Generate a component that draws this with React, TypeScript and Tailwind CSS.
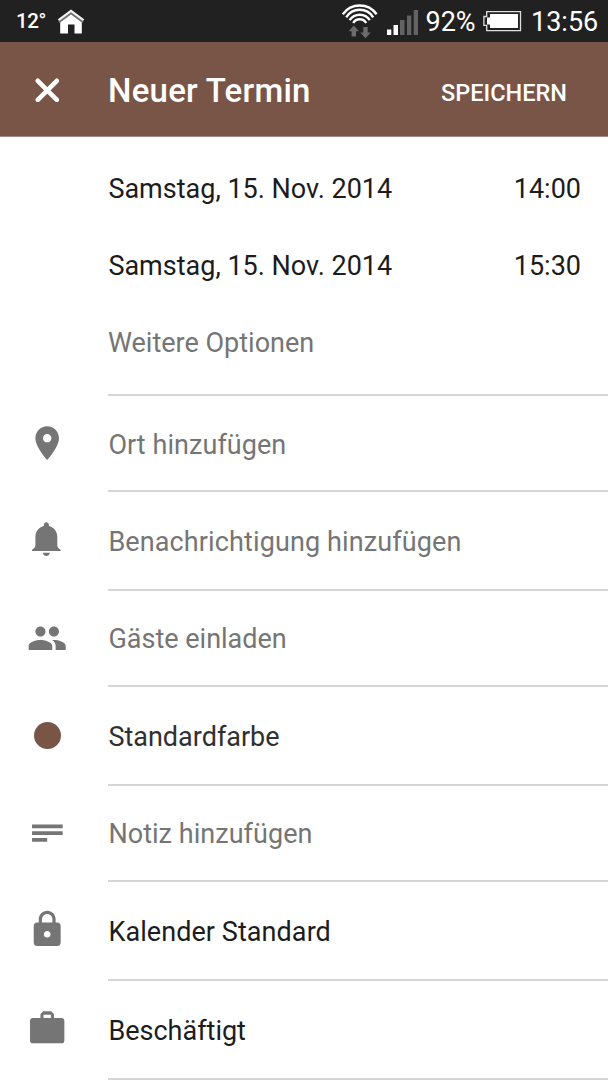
import type { ReactNode } from "react";

interface OptionRow {
  label: string;
  icon: ReactNode;
  height: string;
  textTop: string;
  color: string;
  tracking: string;
}

function Glyph({ d }: { d: string }) {
  return (
    <svg viewBox="0 0 24 24" className="w-[40.4px] h-[40.4px] fill-[#757575]">
      <path d={d} />
    </svg>
  );
}

const PIN =
  "M12 2C8.13 2 5 5.13 5 9c0 5.25 7 13 7 13s7-7.75 7-13c0-3.87-3.13-7-7-7zm0 9.5c-1.38 0-2.5-1.12-2.5-2.5s1.12-2.5 2.5-2.5 2.5 1.12 2.5 2.5-1.12 2.5-2.5 2.5z";
const BELL =
  "M9.4 20.1h4.2c-.1 1.1-1 1.900-2.100 1.900s-2-.8-2.100-1.900zM18 15.500v-5c0-3.07-2.13-5.64-5-6.32V3.5c0-.83-.67-1.5-1.5-1.5S10 2.67 10 3.5v.68c-2.87.68-5 3.25-5 6.32v5c0 1.200-.8 2.200-2 2.800v.7h17v-.7c-1.200-.6-2-1.600-2-2.800z";
const PEOPLE =
  "M16 11c1.66 0 2.99-1.34 2.99-3S17.66 5 16 5c-1.66 0-3 1.34-3 3s1.34 3 3 3zm-8 0c1.66 0 2.99-1.34 2.99-3S9.66 5 8 5C6.34 5 5 6.34 5 8s1.34 3 3 3zm0 2c-2.33 0-7 1.17-7 3.5V19h14v-2.5c0-2.33-4.67-3.5-7-3.5zm8 0c-.29 0-.62.02-.97.05 1.16.84 1.97 1.97 1.97 3.45V19h6v-2.5c0-2.33-4.67-3.5-7-3.5z";
const NOTES = "M3 6.900h18.200v2.200H3zM3 10.900h18.200v2.200H3zM3 14.900h9v2.200H3z";
const LOCK =
  "M18 8h-1V6c0-2.76-2.24-5-5-5S7 3.24 7 6v2H6c-1.1 0-2 .9-2 2v10c0 1.1.9 2 2 2h12c1.1 0 2-.9 2-2V10c0-1.1-.9-2-2-2zm-6 9c-1.1 0-2-.9-2-2s.9-2 2-2 2 .9 2 2-.9 2-2 2zm3.1-9H8.9V6c0-1.71 1.39-3.1 3.1-3.1 1.71 0 3.1 1.39 3.1 3.1v2z";
const WORK =
  "M20.600 6h-4.600V3.600l-1.600-1.600h-4.800L8 3.600V6H3.400c-.9 0-1.600.7-1.600 1.600v11.800c0 .9.7 1.600 1.600 1.600h17.200c.9 0 1.600-.7 1.600-1.600V7.600c0-.9-.7-1.600-1.600-1.600zM14.200 6H9.800V4h4.400v2z";

const rows: OptionRow[] = [
  { label: "Ort hinzufügen", icon: <Glyph d={PIN} />, height: "h-[96px]", textTop: "pt-[33px]", color: "text-[#757575]", tracking: "tracking-[0.05px]" },
  { label: "Benachrichtigung hinzufügen", icon: <Glyph d={BELL} />, height: "h-[99px]", textTop: "pt-[34px]", color: "text-[#757575]", tracking: "tracking-[0.12px]" },
  { label: "Gäste einladen", icon: <Glyph d={PEOPLE} />, height: "h-[96px]", textTop: "pt-[32px]", color: "text-[#757575]", tracking: "tracking-normal" },
  {
    label: "Standardfarbe",
    icon: <span className="block mt-[8px] w-[27px] h-[27px] rounded-full bg-[#795548]" />,
    height: "h-[99px]",
    textTop: "pt-[34px]",
    color: "text-[#303030]",
    tracking: "tracking-normal",
  },
  { label: "Notiz hinzufügen", icon: <Glyph d={NOTES} />, height: "h-[96px]", textTop: "pt-[32px]", color: "text-[#757575]", tracking: "tracking-[0.04px]" },
  { label: "Kalender Standard", icon: <Glyph d={LOCK} />, height: "h-[99px]", textTop: "pt-[34px]", color: "text-[#1c1c1c]", tracking: "tracking-[0.07px]" },
  { label: "Beschäftigt", icon: <Glyph d={WORK} />, height: "h-[99px]", textTop: "pt-[34px]", color: "text-[#1c1c1c]", tracking: "tracking-normal" },
];

const dates = [
  { date: "Samstag, 15. Nov. 2014", time: "14:00" },
  { date: "Samstag, 15. Nov. 2014", time: "15:30" },
];

function StatusBar() {
  return (
    <div className="h-[42px] shrink-0 bg-[#212121] text-white flex items-start">
      <span className="ml-[16px] mt-[9px] w-[30px] whitespace-nowrap text-[20.500px] leading-[24px] tracking-[-0.4px] font-medium">12°</span>
      <svg viewBox="0 0 28 26" className="ml-[11px] mt-[9px] w-[28px] h-[26px] shrink-0">
        <path d="M3.200 12.500 14 4l10.800 8.500v12h-7.300V15.500h-6.500v9H3.200z" fill="#fff" />
        <path d="M1.800 13 14 4l12.200 9" fill="none" stroke="#6f6f6f" strokeWidth="2.200" />
        <path d="M1.500 11.200 14 1.800l12.500 9.400" fill="none" stroke="#f2f2f2" strokeWidth="2.200" />
      </svg>
      <div className="flex-1" />
      <svg viewBox="342 0 78 42" className="w-[78px] h-[42px] shrink-0">
        {/* wifi */}
        <g fill="none" stroke="#fff" strokeWidth="2.400">
          <path d="M342.800 14.300A20.600 20.600 0 0 1 376.600 14.300" />
          <path d="M346.200 17.300A15.800 15.800 0 0 1 373.200 17.300" />
          <path d="M349.600 20.200A12 12 0 0 1 369.800 20.200" />
          <path d="M353.200 23A7.500 7.500 0 0 1 366.200 23" />
        </g>
        <path d="M353.800 25.500l5.200 5.700h-3v5.300h-4.400v-5.300h-3zM365.500 38.300l-5.200-5.800h3v-5.400h4.400v5.400h3z" fill="#6c6c6c" />
        {/* signal */}
        <path d="M387 29.500h4.300V35H387zM393.500 25h4.500v10h-4.500z" fill="#fff" />
        <path d="M400 20h4.500v15H400zM407 15.500h4.300V35H407zM413.700 10h4.300v25h-4.300z" fill="#636363" />
      </svg>
      <span className="ml-[5.500px] mt-[5px] w-[57.500px] whitespace-nowrap text-[27px] leading-[34px]">92%</span>
      <svg viewBox="482 0 40 42" className="-ml-px w-[40px] h-[42px] shrink-0">
        <path d="M486.700 11.600h33.800v19h-33.800v-5.300h-2.800v-8.800h2.800z" fill="none" stroke="#dedede" strokeWidth="1.300" />
        <path d="M490 14h28v14h-28v-3.500h-3v-7h3z" fill="#fff" />
      </svg>
      <span className="ml-[9px] mt-[5px] w-[77px] whitespace-nowrap text-[27px] leading-[34px]">13:56</span>
    </div>
  );
}

export default function App() {
  return (
    <div className="w-[608px] h-[1080px] overflow-hidden flex flex-col bg-white font-['Roboto',sans-serif]">
      <StatusBar />

      {/* Toolbar */}
      <header className="h-[95px] shrink-0 flex items-start bg-[#795548] border-b border-[#a28b82] text-white">
        <button className="ml-[35px] mt-[36px] w-[24px] h-[24px]" aria-label="Schließen">
          <svg viewBox="0 0 24 24" className="w-[24px] h-[24px]">
            <path d="M2.800 2.800l19 19M21.800 2.800l-19 19" stroke="#fff" strokeWidth="4.600" strokeLinecap="round" />
          </svg>
        </button>
        <h1 className="ml-[49px] mt-[29px] text-[33px] leading-[40px] tracking-[0.25px] font-medium">Neuer Termin</h1>
        <div className="flex-1" />
        <button className="mr-[41px] mt-[35px] text-[23.500px] leading-[32px] font-medium">SPEICHERN</button>
      </header>

      <main className="text-[27px] leading-[32px]">
        {/* Start and end */}
        <section className="ml-[108px] h-[259px] pt-[36px] flex flex-col gap-[45px] border-b-2 border-[#d6d6d6] text-[#1c1c1c]">
          {dates.map((entry) => (
            <div key={entry.time} className="flex justify-between pl-[0.4px] pr-[27px]">
              <span>{entry.date}</span>
              <span>{entry.time}</span>
            </div>
          ))}
          <span className="text-[#757575]">Weitere Optionen</span>
        </section>

        {rows.map((row) => (
          <div key={row.label} className={`flex ${row.height}`}>
            <div className="w-[108px] shrink-0 pr-[13.500px] pt-[26.600px] flex justify-center">{row.icon}</div>
            <div className={`flex-1 border-b-2 border-[#d6d6d6] pl-[0.4px] ${row.textTop} ${row.color}`}>
              <span className={row.tracking}>{row.label}</span>
            </div>
          </div>
        ))}
      </main>
    </div>
  );
}
